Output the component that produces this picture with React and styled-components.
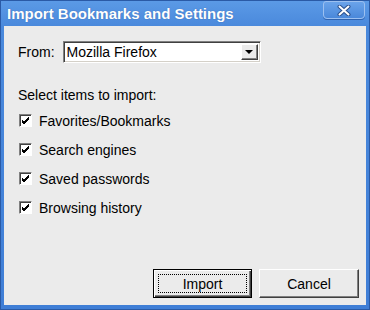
import React from 'react';
import styled, { createGlobalStyle } from 'styled-components';

const GlobalStyle = createGlobalStyle`
  html, body {
    margin: 0;
    padding: 0;
    background: #ffffff;
  }
  body {
    font-family: "Liberation Sans", Arial, sans-serif;
  }
`;

const Window = styled.div`
  width: 370px;
  height: 310px;
  box-sizing: border-box;
  border: 1px solid #2a5aa6;
  background: linear-gradient(180deg, #5b9ae6 0px, #4a89dc 25px, #3f7ed6 100%);
  display: flex;
  flex-direction: column;
`;

const TitleBar = styled.div`
  height: 25px;
  display: flex;
  align-items: flex-start;
  justify-content: space-between;
  padding: 0 4px 0 6px;
`;

const Title = styled.div`
  color: #ffffff;
  font-size: 15px;
  font-weight: bold;
  line-height: 17px;
  margin-top: 4px;
  text-shadow: 0 0 1px rgba(20, 50, 110, 0.5);
`;

const CloseButton = styled.button`
  width: 42px;
  height: 18px;
  padding: 0;
  border: 1px solid #9cc0f0;
  border-radius: 3px 3px 4px 4px;
  background: linear-gradient(180deg, #6aa3ea, #4a88da);
  box-shadow: 0 1px 0 #2f63b0;
  display: flex;
  align-items: center;
  justify-content: center;
`;

const Client = styled.div`
  flex: 1;
  margin: 0 3px 4px 3px;
  background: #ebebeb;
  display: flex;
  flex-direction: column;
  padding: 15px 7px 7px 14px;
  font-size: 14px;
  color: #000000;
`;

const FromRow = styled.div`
  display: flex;
  align-items: center;
  gap: 8px;
`;

const Label = styled.span`
  line-height: 16px;
`;

const Select = styled.div`
  width: 198px;
  height: 22px;
  box-sizing: border-box;
  border: 1px solid;
  border-color: #808080 #ffffff #ffffff #808080;
  box-shadow: inset 1px 1px 0 #404040, inset -1px -1px 0 #d4d0c8;
  background: #ffffff;
  display: flex;
  align-items: stretch;
  padding: 2px;
`;

const SelectValue = styled.div`
  flex: 1;
  line-height: 16px;
  padding-left: 1px;
`;

const DropButton = styled.div`
  width: 17px;
  box-sizing: border-box;
  border: 1px solid;
  border-color: #ffffff #404040 #404040 #ffffff;
  box-shadow: inset -1px -1px 0 #808080;
  background: #ebebeb;
  display: flex;
  align-items: center;
  justify-content: center;
`;

const SectionLabel = styled.div`
  line-height: 16px;
  margin-top: 24px;
`;

const CheckList = styled.div`
  display: flex;
  flex-direction: column;
  gap: 13px;
  margin-top: 10px;
`;

const CheckRow = styled.label`
  display: flex;
  align-items: center;
  gap: 7px;
  line-height: 16px;
  padding-left: 1px;
`;

const Box = styled.span`
  width: 13px;
  height: 13px;
  box-sizing: border-box;
  border: 1px solid;
  border-color: #808080 #ffffff #ffffff #808080;
  box-shadow: inset 1px 1px 0 #404040;
  background: #ffffff;
  display: flex;
  align-items: center;
  justify-content: center;
  margin-top: -2px;
`;

const ButtonRow = styled.div`
  margin-top: auto;
  display: flex;
  justify-content: flex-end;
  gap: 7px;
`;

const Button = styled.button`
  width: ${(p) => (p.primary ? 99 : 100)}px;
  height: 29px;
  box-sizing: border-box;
  font-family: "Liberation Sans", Arial, sans-serif;
  font-size: 14px;
  color: #000000;
  background: #ebebeb;
  border: 1px solid;
  border-color: ${(p) => (p.primary ? '#000000' : '#ffffff #404040 #404040 #ffffff')};
  box-shadow: ${(p) =>
    p.primary
      ? 'inset 1px 1px 0 #ffffff, inset -1px -1px 0 #404040, inset -2px -2px 0 #808080'
      : 'inset -1px -1px 0 #808080'};
  padding: 0;
  display: flex;
  align-items: center;
  justify-content: center;
  position: relative;
`;

const Focus = styled.span`
  position: absolute;
  inset: 4px;
  border: 1px dotted #000000;
`;

const items = [
  'Favorites/Bookmarks',
  'Search engines',
  'Saved passwords',
  'Browsing history',
];

const Check = () => (
  <svg width="9" height="9" viewBox="0 0 9 9">
    <path d="M1 4 L3 6 L8 1 M1 5 L3 7 L8 2 M1 6 L3 8 L8 3" stroke="#000" strokeWidth="1" fill="none" shapeRendering="crispEdges" />
  </svg>
);

const App = () => (
  <>
    <GlobalStyle />
    <Window>
      <TitleBar>
        <Title>Import Bookmarks and Settings</Title>
        <CloseButton>
          <svg width="14" height="11" viewBox="0 0 14 11">
            <path d="M2.5 1.5 L11.5 9.5 M11.5 1.5 L2.5 9.5" stroke="#2a4f8c" strokeWidth="4" strokeLinecap="round" />
            <path d="M2.5 1.5 L11.5 9.5 M11.5 1.5 L2.5 9.5" stroke="#ffffff" strokeWidth="2" strokeLinecap="round" />
          </svg>
        </CloseButton>
      </TitleBar>
      <Client>
        <FromRow>
          <Label>From:</Label>
          <Select>
            <SelectValue>Mozilla Firefox</SelectValue>
            <DropButton>
              <svg width="8" height="4" viewBox="0 0 8 4">
                <path d="M0 0 H8 L4 4 Z" fill="#000" />
              </svg>
            </DropButton>
          </Select>
        </FromRow>
        <SectionLabel>Select items to import:</SectionLabel>
        <CheckList>
          {items.map((item) => (
            <CheckRow key={item}>
              <Box>
                <Check />
              </Box>
              {item}
            </CheckRow>
          ))}
        </CheckList>
        <ButtonRow>
          <Button primary>
            <Focus />
            Import
          </Button>
          <Button>Cancel</Button>
        </ButtonRow>
      </Client>
    </Window>
  </>
);

export default App;
